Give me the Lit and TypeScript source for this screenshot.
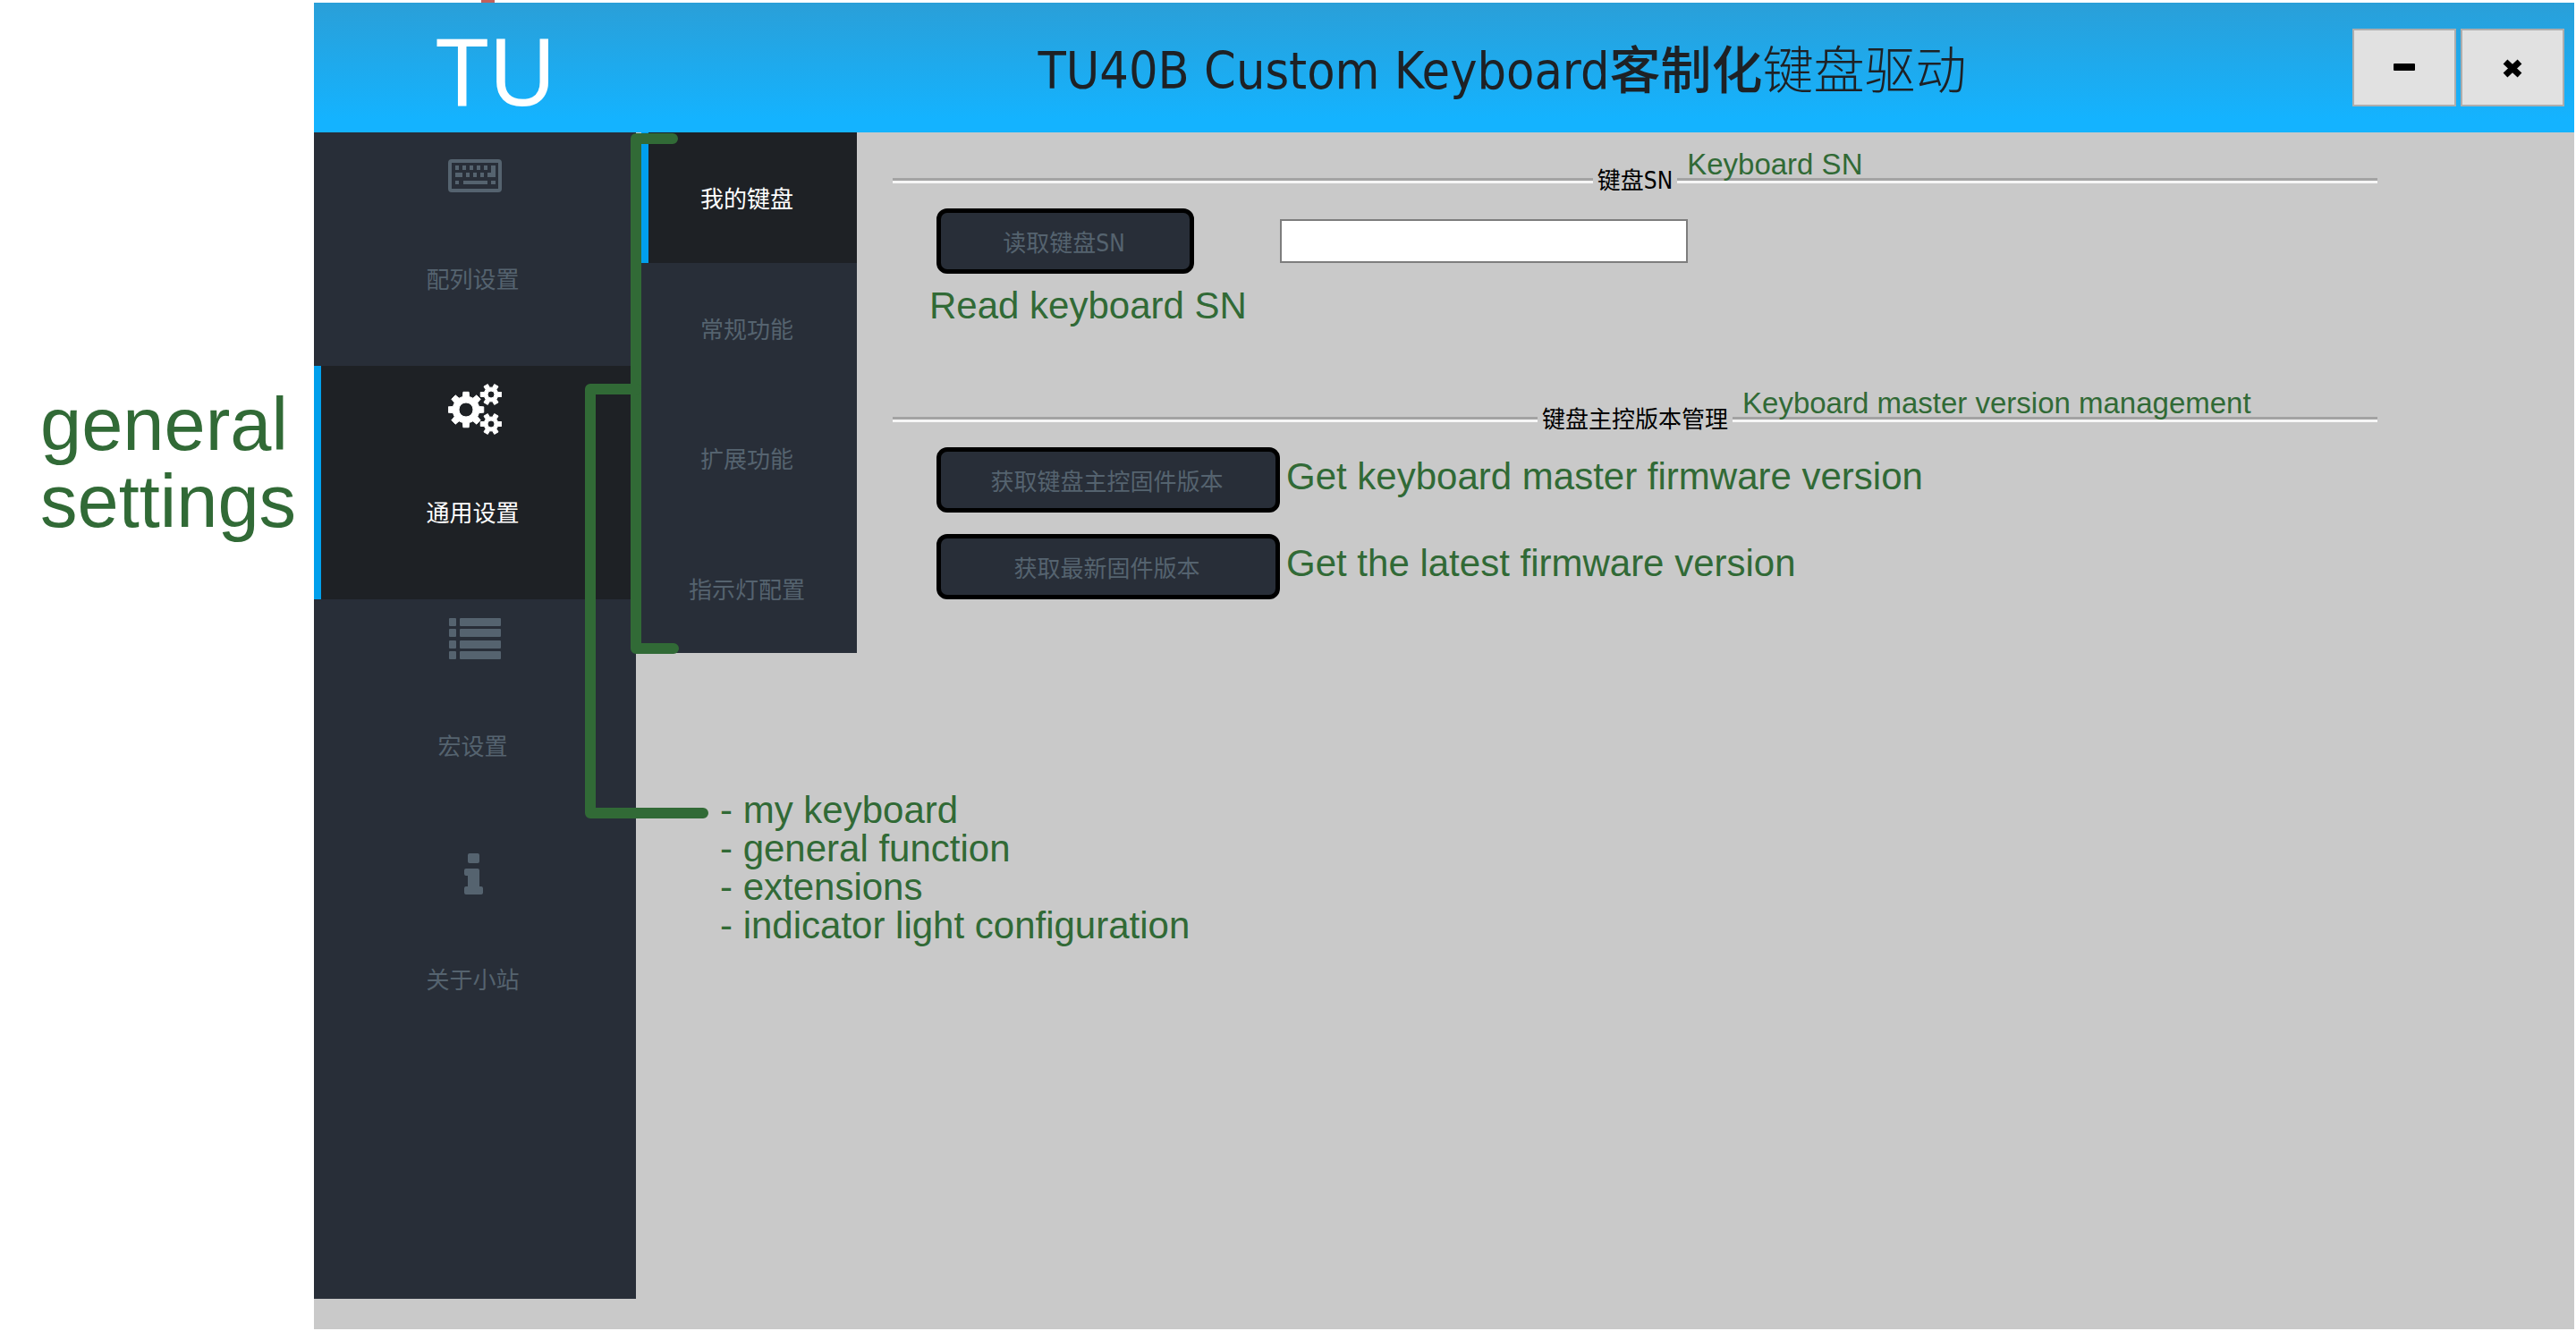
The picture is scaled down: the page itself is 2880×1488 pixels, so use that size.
import { LitElement, html, svg, css } from "lit";
import { customElement, property, state } from "lit/decorators.js";

type IconName = "keyboard" | "gears" | "list" | "info";

/** Outline of a cog with a round hole, for use with the even-odd fill rule. */
function cog(cx: number, cy: number, outer: number, root: number, hole: number, teeth: number, turn = 0): string {
  const step = (Math.PI * 2) / teeth;
  const at = (r: number, a: number) => `${(cx + r * Math.cos(a)).toFixed(2)} ${(cy + r * Math.sin(a)).toFixed(2)}`;
  const points: string[] = [];
  for (let i = 0; i < teeth; i++) {
    const a = i * step + turn;
    points.push(at(root, a - step * 0.3), at(outer, a - step * 0.2), at(outer, a + step * 0.2), at(root, a + step * 0.3));
  }
  return `M${points.join("L")}Z M${cx - hole} ${cy}a${hole} ${hole} 0 1 0 ${hole * 2} 0a${hole} ${hole} 0 1 0 ${-hole * 2} 0Z`;
}

const icons = {
  keyboard: svg`
    <rect x="2" y="13" width="56" height="33" rx="2" fill="none" stroke="currentColor" stroke-width="4"/>
    <g fill="currentColor">
      <rect x="8" y="18" width="4" height="5"/><rect x="16" y="18" width="4" height="5"/>
      <rect x="24" y="18" width="4" height="5"/><rect x="32" y="18" width="4" height="5"/>
      <rect x="40" y="18" width="4" height="5"/>
      <path d="M48 18h5v13h-9v-5h4z"/>
      <rect x="8" y="26" width="8" height="5"/><rect x="20" y="26" width="4" height="5"/>
      <rect x="28" y="26" width="4" height="5"/><rect x="36" y="26" width="4" height="5"/>
      <rect x="8" y="35" width="4" height="4"/><rect x="17" y="35" width="27" height="4"/>
      <rect x="48" y="35" width="5" height="4"/>
    </g>`,
  gears: svg`
    <g fill="currentColor" fill-rule="evenodd" stroke="currentColor" stroke-width="1" stroke-linejoin="round">
      <path d="${cog(20, 30, 20, 15, 8, 8)}"/>
      <path d="${cog(48, 13, 12, 8, 4, 6)}"/>
      <path d="${cog(48, 46, 12, 8, 4, 6)}"/>
    </g>`,
  list: svg`
    <g fill="currentColor">
      ${[2, 14, 27, 39].map(
        (y) => svg`<rect x="1" y="${y}" width="8" height="9" rx="1"/><rect x="13" y="${y}" width="46" height="9" rx="1"/>`
      )}
    </g>`,
  info: svg`
    <g fill="currentColor">
      <rect x="22" y="4" width="13" height="11" rx="2"/>
      <path d="M20 21h13q2 0 2 2v18h2q2 0 2 2v5q0 2-2 2H20q-2 0-2-2v-5q0-2 2-2h2V29h-2q-2 0-2-2v-4q0-2 2-2z"/>
    </g>`,
};

@customElement("nav-item")
class NavItem extends LitElement {
  @property() label = "";
  @property() icon?: IconName;
  @property({ type: Boolean, reflect: true }) active = false;

  static styles = css`
    :host {
      display: grid;
    }
    .item {
      display: flex;
      flex-direction: column;
      align-items: center;
      justify-content: center;
      box-sizing: border-box;
      width: 100%;
      margin: 0;
      padding: 5px 0 0;
      border: 0;
      background: #282e38;
      color: #55636f;
      font-family: "DejaVu Sans Condensed", "Noto Sans CJK SC", sans-serif;
      font-size: 26px;
      line-height: 32px;
      cursor: pointer;
    }
    .tall {
      justify-content: flex-start;
      gap: 70px;
      padding-top: 19px;
    }
    .active {
      background: #1e2125;
      box-shadow: inset 8px 0 #009fec;
      color: #fff;
    }
    .icon {
      display: block;
      width: 60px;
      height: 60px;
    }
    .label {
      padding-right: 5px;
    }
  `;

  render() {
    return html`<button
      type="button"
      class="item ${this.icon ? "tall" : ""} ${this.active ? "active" : ""}"
      aria-pressed=${this.active ? "true" : "false"}
    >
      ${this.icon ? html`<svg class="icon" viewBox="0 0 60 60" aria-hidden="true">${icons[this.icon]}</svg>` : null}
      <span class="label">${this.label}</span>
    </button>`;
  }
}

@customElement("app-root")
class AppRoot extends LitElement {
  @state() private section = 1;
  @state() private page = 0;

  private sections: { label: string; icon: IconName }[] = [
    { label: "配列设置", icon: "keyboard" },
    { label: "通用设置", icon: "gears" },
    { label: "宏设置", icon: "list" },
    { label: "关于小站", icon: "info" },
  ];

  private pages = ["我的键盘", "常规功能", "扩展功能", "指示灯配置"];

  static styles = css`
    :host {
      display: flex;
      box-sizing: border-box;
      min-height: 100vh;
      padding: 3px 2px 2px 0;
      background: #fff;
      position: relative;
      font-family: "DejaVu Sans Condensed", "Noto Sans CJK SC", sans-serif;
      font-size: 26px;
      line-height: 32px;
      color: #000;
    }
    .mark {
      position: absolute;
      top: 0;
      left: 538px;
      width: 15px;
      height: 3px;
      background: #c1605c;
    }
    .note {
      margin: 0;
      color: #316a36;
      font-family: "Liberation Sans", sans-serif;
      font-size: 42px;
      line-height: 43px;
      white-space: nowrap;
    }
    .margin-note {
      box-sizing: border-box;
      flex: none;
      width: 351px;
      padding: 429px 0 0 45px;
      font-size: 83px;
      line-height: 86px;
    }
    .window {
      position: relative;
      flex: 1;
      min-width: 0;
      display: flex;
      flex-direction: column;
      background: #c9c9c9;
    }
    .titlebar {
      display: grid;
      grid-template-columns: 360px 1fr 360px;
      align-items: center;
      height: 145px;
      background: linear-gradient(#2a9fd8, #14b3ff 90%);
    }
    .logo {
      padding: 4px 0 0 48px;
      text-align: center;
      color: #fff;
      font-family: "Noto Sans", sans-serif;
      font-size: 105px;
      line-height: 120px;
    }
    .title {
      margin: 0;
      padding: 6px 0 0 130px;
      text-align: center;
      color: #1e2125;
      font-size: 57px;
      font-weight: 400;
      line-height: 72px;
      white-space: nowrap;
    }
    .title-heavy {
      font-weight: 500;
    }
    .title-light {
      font-weight: 300;
    }
    .controls {
      display: flex;
      justify-content: flex-end;
      gap: 5px;
      padding-right: 11px;
    }
    .control {
      display: grid;
      place-items: center;
      width: 116px;
      height: 87px;
      padding: 0;
      border: 2px solid #adadad;
      background: #e1e1e1;
      cursor: pointer;
    }
    .glyph {
      width: 28px;
      height: 28px;
    }
    .body {
      flex: 1;
      display: flex;
      align-items: stretch;
    }
    .sidebar {
      flex: none;
      width: 360px;
      margin-bottom: 34px;
      background: #282e38;
      display: grid;
      grid-auto-rows: 261px;
      align-content: start;
    }
    .workspace {
      flex: 1;
      min-width: 0;
      margin-left: 6px;
      display: grid;
      grid-template-columns: 241px 1fr;
      grid-template-rows: auto 1fr;
      row-gap: 154px;
    }
    .submenu {
      display: grid;
      grid-template-rows: repeat(4, 1fr);
      height: 582px;
      background: #282e38;
    }
    .panel {
      display: flex;
      flex-direction: column;
      padding: 38px 220px 0 40px;
    }
    .heading {
      display: flex;
      align-items: center;
      margin: 0;
      font-size: 26px;
      font-weight: 400;
      line-height: 32px;
    }
    .heading-later {
      margin-top: 90px;
    }
    .heading::before,
    .heading::after {
      content: "";
      flex: 1;
      height: 3px;
      border-top: 3px solid #a3a3a3;
      background: #f6f6f6;
    }
    .heading-text {
      position: relative;
      padding: 0 5px;
    }
    .heading-note {
      position: absolute;
      left: calc(100% + 11px);
      bottom: 15px;
      font-size: 33px;
      line-height: 38px;
    }
    .row {
      display: flex;
      align-items: center;
      padding: 15px 0 0 49px;
    }
    .row-next {
      padding-top: 24px;
    }
    .action {
      box-sizing: border-box;
      height: 73px;
      padding: 4px 3px 0 0;
      border: 5px solid #000;
      border-radius: 12px;
      background: #282e38;
      color: #55636f;
      font: inherit;
      cursor: pointer;
    }
    .action-short {
      width: 288px;
    }
    .action-long {
      width: 384px;
    }
    .field {
      box-sizing: border-box;
      width: 456px;
      height: 49px;
      margin-left: 96px;
      padding: 0 8px;
      border: 2px solid #7d7d7d;
      background: #fff;
      font: inherit;
    }
    .below-note {
      padding: 14px 0 0 41px;
    }
    .side-note {
      padding: 0 0 9px 7px;
    }
    .page-notes {
      grid-column: 1 / -1;
      list-style: none;
      padding: 0 0 0 88px;
    }
    .brackets {
      position: absolute;
      left: 300px;
      top: 143px;
      width: 150px;
      height: 780px;
      fill: none;
      stroke: #316a36;
      stroke-width: 12;
      stroke-linecap: round;
      stroke-linejoin: round;
      pointer-events: none;
    }
  `;

  render() {
    return html`
      <span class="mark"></span>
      <p class="note margin-note">general<br />settings</p>
      <div class="window">
        <header class="titlebar">
          <div class="logo">TU</div>
          <h1 class="title">TU40B Custom Keyboard<span class="title-heavy">客制化</span><span class="title-light">键盘驱动</span></h1>
          <div class="controls">
            <button type="button" class="control" aria-label="最小化">
              <svg class="glyph" viewBox="0 0 28 28"><rect x="2" y="9" width="24" height="8" rx="1" /></svg>
            </button>
            <button type="button" class="control" aria-label="关闭">
              <svg class="glyph" viewBox="0 0 28 28"><path d="M6 7L22 22M22 7L6 22" stroke="#000" stroke-width="7" /></svg>
            </button>
          </div>
        </header>
        <div class="body">
          <nav class="sidebar">
            ${this.sections.map(
              (s, i) => html`<nav-item
                .label=${s.label}
                .icon=${s.icon}
                .active=${i === this.section}
                @click=${() => (this.section = i)}
              ></nav-item>`
            )}
          </nav>
          <main class="workspace">
            <nav class="submenu">
              ${this.pages.map(
                (p, i) => html`<nav-item .label=${p} .active=${i === this.page} @click=${() => (this.page = i)}></nav-item>`
              )}
            </nav>
            <div class="panel">
              <h2 class="heading">
                <span class="heading-text"><label for="sn">键盘SN</label><span class="note heading-note">Keyboard SN</span></span>
              </h2>
              <div class="row">
                <button type="button" class="action action-short">读取键盘SN</button>
                <input id="sn" class="field" type="text" />
              </div>
              <p class="note below-note">Read keyboard SN</p>
              <h2 class="heading heading-later">
                <span class="heading-text">键盘主控版本管理<span class="note heading-note">Keyboard master version management</span></span>
              </h2>
              <div class="row">
                <button type="button" class="action action-long">获取键盘主控固件版本</button>
                <p class="note side-note">Get keyboard master firmware version</p>
              </div>
              <div class="row row-next">
                <button type="button" class="action action-long">获取最新固件版本</button>
                <p class="note side-note">Get the latest firmware version</p>
              </div>
            </div>
            <ul class="note page-notes">
              <li>- my keyboard</li>
              <li>- general function</li>
              <li>- extensions</li>
              <li>- indicator light configuration</li>
            </ul>
          </main>
        </div>
        <svg class="brackets" viewBox="0 0 150 780" aria-hidden="true">
          <path d="M101 9H60V579H102" />
          <path d="M60 289H9V763H135" />
        </svg>
      </div>
    `;
  }
}
